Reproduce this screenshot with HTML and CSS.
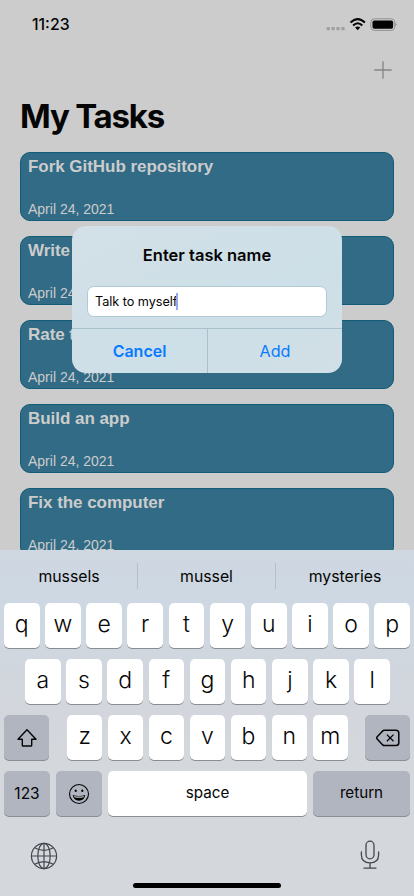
FILE: index.html
```html
<!DOCTYPE html>
<html lang="en">
<head>
<meta charset="utf-8">
<title>My Tasks</title>
<link rel="stylesheet" href="styles.css">
</head>
<body>
<div class="screen">
  <header class="status">
    <span class="time">11:23</span>
    <svg class="status-icons" width="72" height="16" viewBox="0 0 72 16">
      <g fill="#a0a0a0"><rect x="1.5" y="10" width="3.5" height="3.3" rx="1"/><rect x="6.4" y="10" width="3.5" height="3.3" rx="1"/><rect x="11.3" y="10" width="3.5" height="3.3" rx="1"/><rect x="16.2" y="10" width="3.5" height="3.3" rx="1"/></g>
      <g fill="none" stroke="#050505" stroke-width="2.1"><path d="M25.5 5.6Q32.7 -1.3 39.9 5.6"/><path d="M28.1 8.5Q32.7 4 37.3 8.5"/></g>
      <path d="M30.1 10.6Q32.7 8.5 35.3 10.6L32.7 13.2Z" fill="#050505"/>
      <rect x="45.8" y="1.8" width="24" height="11.6" rx="3.6" fill="none" stroke="#929292"/>
      <rect x="47.5" y="3.5" width="20.6" height="8.2" rx="1.8" fill="#030303"/>
      <path d="M70.6 5.8Q72.4 7.6 70.6 9.4Z" fill="#666"/>
    </svg>
  </header>
  <div class="toolbar">
    <svg width="18" height="18" viewBox="0 0 18 18" fill="none" stroke="#858585" stroke-width="1.3"><path d="M9 .3V17.7M.3 9H17.7"/></svg>
  </div>
  <h1>My Tasks</h1>
  <main class="tasks">
    <article class="task"><h2>Fork GitHub repository</h2><p>April 24, 2021</p></article>
    <article class="task"><h2>Write</h2><p>April 24, 2021</p></article>
    <article class="task"><h2>Rate t</h2><p>April 24, 2021</p></article>
    <article class="task"><h2>Build an app</h2><p>April 24, 2021</p></article>
    <article class="task"><h2>Fix the computer</h2><p>April 24, 2021</p></article>
  </main>

  <section class="alert">
    <h3>Enter task name</h3>
    <div class="field"><span>Talk to myself</span><i class="caret"></i></div>
    <div class="actions"><button class="cancel">Cancel</button><button>Add</button></div>
  </section>

  <section class="keyboard">
    <div class="suggestions"><span>mussels</span><span>mussel</span><span>mysteries</span></div>
    <div class="row"><b>q</b><b>w</b><b>e</b><b>r</b><b>t</b><b>y</b><b>u</b><b>i</b><b>o</b><b>p</b></div>
    <div class="row second"><b>a</b><b>s</b><b>d</b><b>f</b><b>g</b><b>h</b><b>j</b><b>k</b><b>l</b></div>
    <div class="row third">
      <b class="dark side"><svg width="22" height="20" viewBox="0 0 22 20" fill="none" stroke="#050505" stroke-width="1.4" stroke-linejoin="round"><path d="M11 1.8L20 11.3H15.7V17.2Q15.7 18 14.9 18H7.1Q6.3 18 6.3 17.2V11.3H2Z"/></svg></b>
      <div class="letters"><b>z</b><b>x</b><b>c</b><b>v</b><b>b</b><b>n</b><b>m</b></div>
      <b class="dark side"><svg width="24" height="18" viewBox="0 0 24 18" fill="none" stroke="#050505" stroke-width="1.5" stroke-linejoin="round"><path d="M8.3 1.2H20Q22.8 1.2 22.8 4V13.8Q22.8 16.6 20 16.6H8.3Q7.4 16.6 6.7 15.9L1.2 10Q.3 8.9 1.2 7.8L6.7 1.9Q7.4 1.2 8.3 1.2Z"/><path d="M10.9 5.6L17.5 12.2M17.5 5.6L10.9 12.2" stroke-width="1.3"/></svg></b>
    </div>
    <div class="row last">
      <b class="dark num">123</b>
      <b class="dark emoji"><svg width="22" height="22" viewBox="0 0 22 22"><circle cx="11" cy="11" r="9.5" fill="none" stroke="#050505" stroke-width="1.1"/><ellipse cx="7.7" cy="7.8" rx="1.1" ry="1.3"/><ellipse cx="14.3" cy="7.8" rx="1.1" ry="1.3"/><path d="M4.7 12Q11 14 17.3 12Q16.4 17.7 11 17.7Q5.6 17.7 4.7 12Z"/><path d="M5.8 12.9Q11 14.3 16.2 12.9L15.5 14.2Q11 15.5 6.5 14.2Z" fill="#c9cdd4"/></svg></b>
      <b class="space">space</b><b class="dark return">return</b>
    </div>
    <footer class="bottom">
      <svg width="28" height="28" viewBox="0 0 28 28" fill="none" stroke="#42484f" stroke-width="1.2"><circle cx="14" cy="14" r="12.6"/><ellipse cx="14" cy="14" rx="6.2" ry="12.6"/><path d="M14 1.4V26.6M1.4 14H26.6M4.6 5.8Q14 11 23.4 5.8M4.6 22.2Q14 17 23.4 22.2"/></svg>
      <svg width="20" height="30" viewBox="0 0 20 30" fill="none" stroke="#42484f" stroke-width="1.3" stroke-linecap="round"><rect x="6" y="1.2" width="8" height="17.6" rx="4"/><path d="M1.4 12V15Q1.4 22.8 10 22.8Q18.6 22.8 18.6 15V12M10 22.8V28M4 28.2H16"/></svg>
    </footer>
    <div class="home"></div>
  </section>
</div>
</body>
</html>
```
FILE: styles.css
```css
* { box-sizing: border-box; }
body { margin: 0; font-family: Inter, sans-serif; }
h1, h2, h3, p { margin: 0; }
.screen { position: relative; width: 414px; height: 896px; overflow: hidden; background: #ccc; color: #050505; }
.status { height: 48px; padding: 17px 17px 0 32px; display: flex; justify-content: space-between; align-items: flex-start; }
.status-icons { overflow: visible; }
.time { font-size: 15.8px; line-height: 16px; font-weight: 500; }
.toolbar { height: 44px; padding: 13px 22px 0 0; display: flex; justify-content: flex-end; }
h1 { height: 60px; padding: 4px 20px 0; font-size: 33px; line-height: 40px; font-weight: 700; letter-spacing: -1.2px; }
.tasks { display: flex; flex-direction: column; gap: 15px; padding: 0 20px; margin-top: -.2px; }
.task { height: 69px; flex: none; padding: 4px 7px 3px; border: 1px solid #125b79; border-radius: 10px; background: #316b85; color: #ccc; display: flex; flex-direction: column; justify-content: space-between; font-family: "Liberation Sans", sans-serif; }
.task h2 { font-size: 17px; line-height: 20px; font-weight: 700; letter-spacing: -.04px; }
.task p { font-size: 14px; line-height: 16px; }
.alert { position: absolute; left: 72px; top: 226px; width: 270px; height: 147px; border-radius: 14px; background: linear-gradient(150deg, #d3e0e7, #cddfe7 60%, #d1dfe6); overflow: hidden; display: flex; flex-direction: column; }
.alert h3 { height: 60px; padding-top: 18px; text-align: center; font-size: 16.5px; line-height: 22px; font-weight: 600; }
.field { height: 31px; margin: 0 15px; padding: 0 7px; display: flex; align-items: center; border: 1px solid #b0c9d6; border-radius: 7px; background: #fff; font-size: 12.7px; letter-spacing: -.05px; }
.caret { width: 2px; height: 17px; margin-left: -1px; background: #96a9f5; }
.actions { flex: 1; margin-top: 11px; border-top: 1px solid #a9c1cd; display: grid; grid-template-columns: 136px 134px; }
.actions button { border: 0; padding: 0; background: none; color: #087aff; font: 400 16.2px Inter, sans-serif; }
.actions .cancel { border-right: 1px solid #a9c1cd; font-weight: 600; font-size: 16px; }
.keyboard { position: absolute; left: 0; top: 550px; width: 414px; height: 346px; padding: 0 4px; background: linear-gradient(#cfd7e1, #cdd8e2 15%, #d2d6dd 40%, #d4d7dc 60%); display: flex; flex-direction: column; }
.suggestions { height: 53px; padding: 13px 0; margin: 0 -4px; display: grid; grid-template-columns: 137px 138px 139px; font-size: 15.8px; }
.suggestions span { display: flex; align-items: center; justify-content: center; height: 26px; }
.suggestions span:first-child { padding-left: 1px; }
.suggestions span + span { border-left: 1px solid #b6bec8; }
.row { height: 45px; margin-bottom: 11px; display: flex; gap: 5.6px; flex: none; }
.second { padding: 0 20px 0 21px; }
.row b { flex: 1; display: flex; align-items: center; justify-content: center; min-width: 0; padding-bottom: 3px; border-radius: 5px; background: #fff; box-shadow: 0 1px 0 #8b8d91; font-size: 23px; font-weight: 300; }
.third { gap: 0; }
.letters { flex: 1; display: flex; gap: 5.6px; margin: 0 17px 0 18px; }
.row .dark { background: #b0b5bf; }
.row .side { flex: 0 0 45px; padding: 0; }
.row .num { flex: 0 0 46px; font-size: 15.5px; font-weight: 400; padding: 0; }
.row .emoji { flex: 0 0 46px; padding: 0; }
.row .space, .row .return { font-size: 15.2px; font-weight: 400; padding-bottom: 2px; }
.row .return { flex: 0 0 97px; }
.last { gap: 6px; }
.bottom { display: flex; justify-content: space-between; padding: 13px 30px 0 26px; height: 56px; flex: none; }
.bottom svg:first-child { margin-top: 2px; }
.home { width: 148px; height: 5px; margin: 0 auto; border-radius: 3px; background: #000; }
```
